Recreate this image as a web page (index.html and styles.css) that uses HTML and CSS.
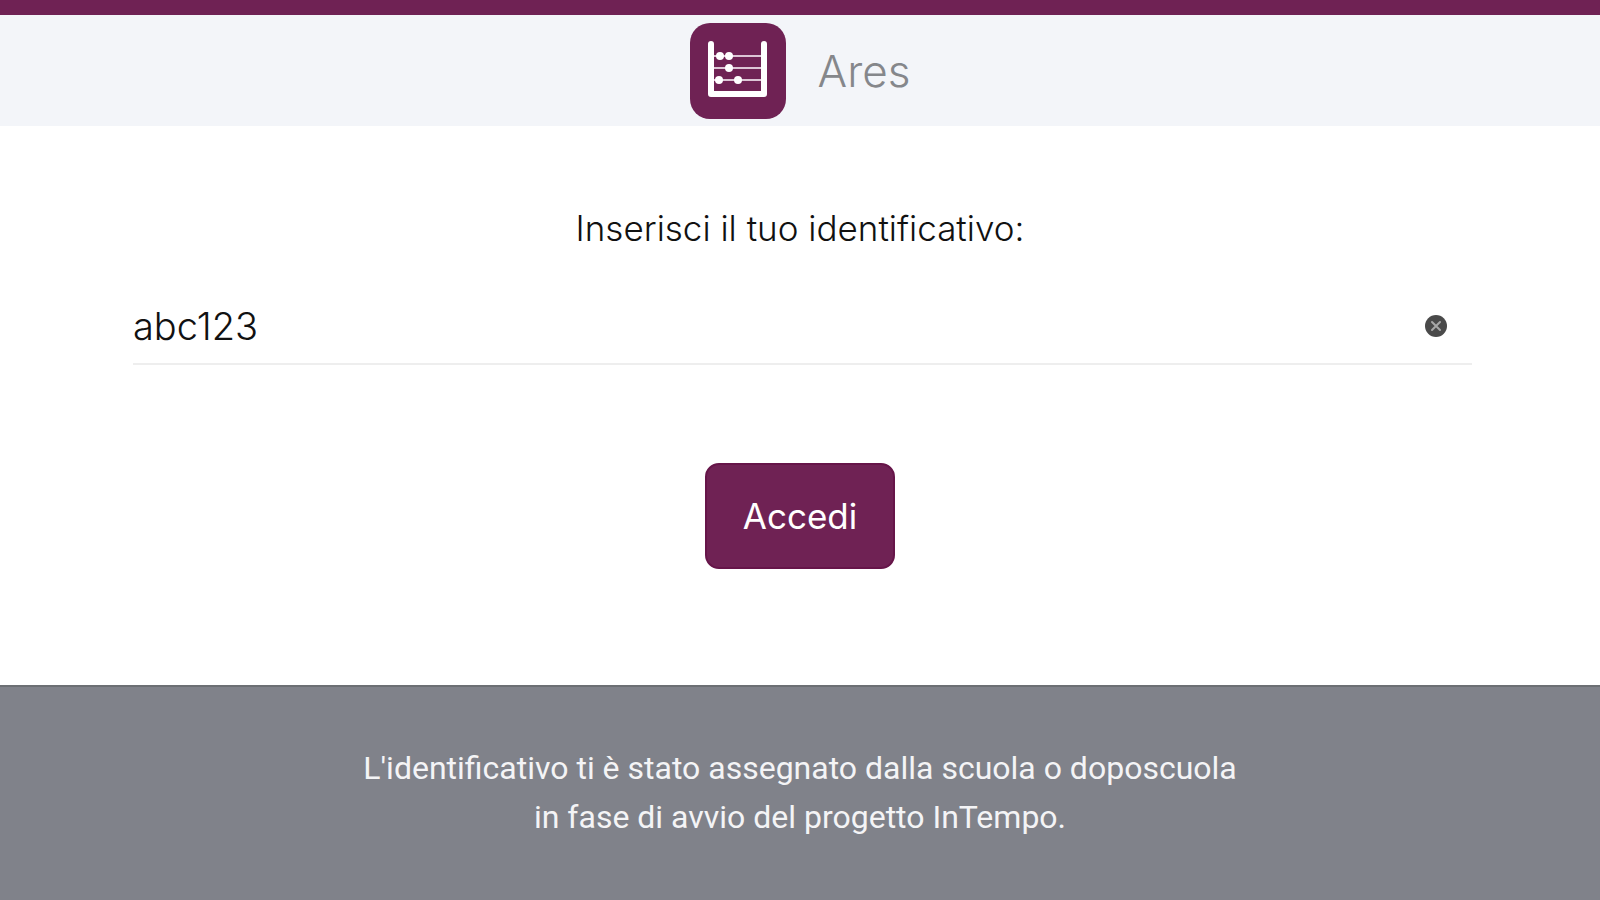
FILE: index.html
```html
<!DOCTYPE html>
<html lang="it">
<head>
<meta charset="utf-8">
<meta name="viewport" content="width=device-width, initial-scale=1">
<title>Ares</title>
<link rel="stylesheet" href="styles.css">
</head>
<body>
<header class="header">
  <svg class="logo" viewBox="0 0 96 96" aria-hidden="true">
    <rect width="96" height="96" rx="20" fill="#6f2254"/>
    <path d="M21 21V71H74V21" fill="none" stroke="#fff" stroke-width="6" stroke-linecap="round" stroke-linejoin="round"/>
    <path d="M24 33H71M24 45H71M24 57H71" stroke="#dcc5d5" stroke-width="2"/>
    <g fill="#fff">
      <circle cx="30" cy="33" r="4"/><circle cx="39" cy="33" r="4"/>
      <circle cx="39" cy="45" r="4"/>
      <circle cx="29" cy="57" r="4"/><circle cx="48" cy="57" r="4"/>
    </g>
  </svg>
  <h1 class="title">Ares</h1>
</header>
<main class="main">
  <form class="form">
    <label class="label" for="ident">Inserisci il tuo identificativo:</label>
    <div class="field">
      <input class="input" id="ident" type="text" value="abc123" autocomplete="off" spellcheck="false">
      <button class="clear" type="button" aria-label="Cancella">
        <svg viewBox="0 0 24 24" aria-hidden="true">
          <circle cx="12" cy="12" r="11" fill="#4a4a4a"/>
          <path d="M8 8L16 16M16 8L8 16" stroke="#a8a8a8" stroke-width="2" stroke-linecap="round"/>
        </svg>
      </button>
    </div>
    <button class="submit" type="button">Accedi</button>
  </form>
</main>
<footer class="footer">
  <p class="note">L'identificativo ti è stato assegnato dalla scuola o doposcuola<br>in fase di avvio del progetto InTempo.</p>
</footer>
</body>
</html>
```
FILE: styles.css
```css
* {
  box-sizing: border-box;
}

body {
  margin: 0;
  min-height: 100vh;
  display: flex;
  flex-direction: column;
  background: #fff;
  color: #111;
  font-family: Inter, "Liberation Sans", sans-serif;
}

.header {
  display: flex;
  justify-content: center;
  align-items: center;
  gap: 32px;
  padding: 8px 0 7px;
  border-top: 15px solid #6f2254;
  background: #f3f5f9;
}

.logo {
  display: block;
  width: 96px;
  height: 96px;
}

.title {
  margin: 0;
  font-size: 44px;
  line-height: 56px;
  font-weight: 300;
  color: #85878b;
}

.main {
  flex: 1;
  padding-top: 78px;
}

.form {
  display: flex;
  flex-direction: column;
  align-items: center;
}

.label {
  font-size: 35px;
  line-height: 48px;
  font-weight: 300;
}

.field {
  display: flex;
  align-items: center;
  align-self: stretch;
  margin: 36px 128px 0 133px;
  padding-right: 24px;
  border-bottom: 2px solid #eeeeee;
}

.input {
  flex: 1;
  min-width: 0;
  height: 75px;
  padding: 0;
  border: 0;
  outline: 0;
  background: transparent;
  color: #111;
  font: 300 38px/48px Inter, "Liberation Sans", sans-serif;
}

.clear {
  width: 24px;
  height: 24px;
  padding: 0;
  border: 0;
  background: none;
}

.clear svg {
  display: block;
}

.submit {
  margin-top: 98px;
  padding: 27px 36px;
  border: 2px solid #661549;
  border-radius: 14px;
  background: #6f2254;
  color: #fff;
  font: 400 35px/48px Inter, "Liberation Sans", sans-serif;
}

.footer {
  padding: 57px 24px 58px;
  border-top: 2px solid #6c6f74;
  background: #80828a;
  color: #f4f4f6;
  text-align: center;
}

.note {
  margin: 0;
  font: 400 32px/49px Roboto, "Liberation Sans", sans-serif;
}
```
